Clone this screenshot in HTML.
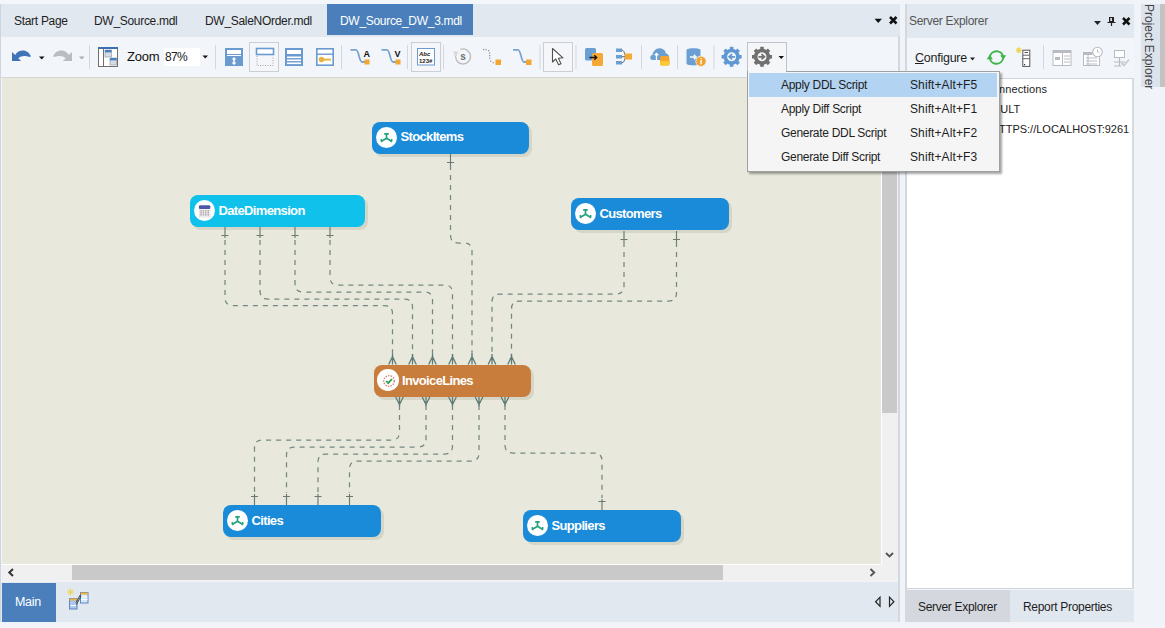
<!DOCTYPE html>
<html><head><meta charset="utf-8">
<style>
*{margin:0;padding:0;box-sizing:border-box}
html,body{width:1165px;height:628px;overflow:hidden;background:#f0f4f8;font-family:"Liberation Sans",sans-serif;font-size:12px;color:#1e1e1e}
.a{position:absolute}
.t{position:absolute;white-space:nowrap;letter-spacing:-0.3px}
.sep{position:absolute;top:45px;width:1px;height:24px;background:#d3d8de}
.pbtn{position:absolute;top:42px;width:30px;height:30px;border:1px solid #c2c6cc;background:#f4f6f9}
.ent{position:absolute;height:32px;border-radius:8px;box-shadow:3px 3px 0 #d6d6c8}
.ent .ic{position:absolute;left:3.7px;top:4.7px;width:21.6px;height:21.6px;border-radius:50%;background:#fff}
.ent .nm{position:absolute;left:28.5px;top:8px;font-weight:bold;font-size:13px;color:#fff;letter-spacing:-0.65px;white-space:nowrap}
</style></head><body>
<!-- left doc area -->
<div class="a" style="left:0;top:0;width:900px;height:4px;background:#f3f6fa"></div>
<div class="a" style="left:1px;top:4px;width:899px;height:33px;background:#e1e8f0"></div>
<div class="a" style="left:0;top:4px;width:1px;height:618px;background:#cfd5dc"></div>
<div class="t" style="left:14px;top:14px">Start Page</div>
<div class="t" style="left:94px;top:14px">DW_Source.mdl</div>
<div class="t" style="left:205px;top:14px">DW_SaleNOrder.mdl</div>
<div class="a" style="left:327px;top:4px;width:146px;height:31px;background:#4a7fbb"></div>
<div class="t" style="left:340px;top:14px;color:#fff">DW_Source_DW_3.mdl</div>
<!-- doc dropdown / close -->
<svg class="a" style="left:874px;top:18px" width="10" height="6"><path d="M0.5 0.8H8L4.25 5Z" fill="#111"/></svg>
<svg class="a" style="left:888px;top:15px" width="10" height="10"><path d="M2 2L8.5 8.5M8.5 2L2 8.5" stroke="#111" stroke-width="2.6"/></svg>

<!-- toolbar -->
<div class="a" style="left:1px;top:37px;width:898px;height:40px;background:#f2f5f9"></div>
<div class="a" style="left:1px;top:77px;width:898px;height:1px;background:#d4d6d6"></div>

<!-- canvas -->
<div class="a" style="left:2px;top:78px;width:879px;height:486px;background:#e8e9dc"></div>

<!-- diagram -->
<svg class="a" style="left:0;top:0" width="1165" height="628">
<g fill="none" stroke="#728880" stroke-width="1.25" stroke-dasharray="5 5">
<path d="M225,240 L225.0,297.5 Q225,305.5 233.0,305.5 L384.5,305.5 Q392.5,305.5 392.5,313.5 L392.5,356"/>
<path d="M260,240 L260.0,291.0 Q260,299 268.0,299.0 L404.5,299.0 Q412.5,299 412.5,307.0 L412.5,356"/>
<path d="M295,240 L295.0,284.0 Q295,292 303.0,292.0 L424.5,292.0 Q432.5,292 432.5,300.0 L432.5,356"/>
<path d="M330,240 L330.0,277.0 Q330,285 338.0,285.0 L444.5,285.0 Q452.5,285 452.5,293.0 L452.5,356"/>
<path d="M450.5,165 L450.5,235.0 Q450.5,243 458.5,243.0 L464.0,243.0 Q472,243 472.0,251.0 L472,356"/>
<path d="M624,242 L624.0,286.0 Q624,294 616.0,294.0 L500.0,294.0 Q492,294 492.0,302.0 L492,356"/>
<path d="M676.5,242 L676.5,293.0 Q676.5,301 668.5,301.0 L519.5,301.0 Q511.5,301 511.5,309.0 L511.5,356"/>
<path d="M399.5,405 L399.5,432.0 Q399.5,440 391.5,440.0 L262.5,440.0 Q254.5,440 254.5,448.0 L254.5,493"/>
<path d="M426,405 L426.0,439.0 Q426,447 418.0,447.0 L294.5,447.0 Q286.5,447 286.5,455.0 L286.5,493"/>
<path d="M452.5,405 L452.5,446.0 Q452.5,454 444.5,454.0 L326.0,454.0 Q318,454 318.0,462.0 L318,493"/>
<path d="M479,405 L479.0,453.0 Q479,461 471.0,461.0 L357.5,461.0 Q349.5,461 349.5,469.0 L349.5,493"/>
<path d="M505,405 L505.0,445.0 Q505,453 513.0,453.0 L594.0,453.0 Q602,453 602.0,461.0 L602,498"/>
</g>
</svg>
<div class="ent" style="left:372px;top:122px;width:157px;background:#1a8bd9"><div class="ic"></div><div class="nm" style="top:7px">StockItems</div></div>
<div class="ent" style="left:190px;top:195px;width:175px;background:#10c1ec"><div class="ic"></div><div class="nm">DateDimension</div></div>
<div class="ent" style="left:571px;top:198px;width:158px;background:#1a8bd9"><div class="ic"></div><div class="nm">Customers</div></div>
<div class="ent" style="left:373.5px;top:364.5px;width:157px;background:#c97d3d"><div class="ic"></div><div class="nm">InvoiceLines</div></div>
<div class="ent" style="left:223px;top:505px;width:158px;background:#1a8bd9"><div class="ic"></div><div class="nm">Cities</div></div>
<div class="ent" style="left:523px;top:510px;width:158px;background:#1a8bd9"><div class="ic"></div><div class="nm">Suppliers</div></div>
<svg class="a" style="left:0;top:0" width="1165" height="628">
<g fill="none" stroke="#6a7a73" stroke-width="1.15">
<path d="M225,227 V238 M221.5,235.5 H228.5"/>
<path d="M260,227 V238 M256.5,235.5 H263.5"/>
<path d="M295,227 V238 M291.5,235.5 H298.5"/>
<path d="M330,227 V238 M326.5,235.5 H333.5"/>
<path d="M450.5,154 V165 M447.0,162.5 H454.0"/>
<path d="M624,231 V242 M620.5,239.5 H627.5"/>
<path d="M676.5,231 V242 M673.0,239.5 H680.0"/>
<path d="M254.5,505 V494 M251.0,496.5 H258.0"/>
<path d="M286.5,505 V494 M283.0,496.5 H290.0"/>
<path d="M318,505 V494 M314.5,496.5 H321.5"/>
<path d="M349.5,505 V494 M346.0,496.5 H353.0"/>
<path d="M602,510 V499 M598.5,501.5 H605.5"/>
</g>
<g fill="none" stroke="#5f7a74" stroke-width="1.3">
<path d="M392.5,354 V364.5 M388.7,364.5 L392.5,356.5 L396.3,364.5"/>
<path d="M412.5,354 V364.5 M408.7,364.5 L412.5,356.5 L416.3,364.5"/>
<path d="M432.5,354 V364.5 M428.7,364.5 L432.5,356.5 L436.3,364.5"/>
<path d="M452.5,354 V364.5 M448.7,364.5 L452.5,356.5 L456.3,364.5"/>
<path d="M472,354 V364.5 M468.2,364.5 L472,356.5 L475.8,364.5"/>
<path d="M492,354 V364.5 M488.2,364.5 L492,356.5 L495.8,364.5"/>
<path d="M511.5,354 V364.5 M507.7,364.5 L511.5,356.5 L515.3,364.5"/>
<path d="M399.5,397 V406 M395.7,397 L399.5,404.5 L403.3,397"/>
<path d="M426,397 V406 M422.2,397 L426,404.5 L429.8,397"/>
<path d="M452.5,397 V406 M448.7,397 L452.5,404.5 L456.3,397"/>
<path d="M479,397 V406 M475.2,397 L479,404.5 L482.8,397"/>
<path d="M505,397 V406 M501.2,397 L505,404.5 L508.8,397"/>
</g>
<g fill="none" stroke="#23a37c" stroke-width="1.7" stroke-linecap="round"><path d="M386.5,138.3 V133.70000000000002 M384.9,133.9 H388.1 M386.5,138.3 L381.5,141.3 M386.5,138.3 L391.5,141.3 M381.2,139.70000000000002 L381.7,141.5 M391.8,139.70000000000002 L391.3,141.5"/></g>
<rect x="199.2" y="206.5" width="10.8" height="10.5" fill="#f4f4f8" stroke="#d5d5e0" stroke-width="0.6"/>
<rect x="198.9" y="205.3" width="11.4" height="3.6" rx="1.2" fill="#4b58a6"/>
<rect x="200.3" y="210.3" width="1.5" height="1.2" fill="#9c8f90"/>
<rect x="200.3" y="212.3" width="1.5" height="1.2" fill="#9c8f90"/>
<rect x="200.3" y="214.3" width="1.5" height="1.2" fill="#9c8f90"/>
<rect x="202.7" y="210.3" width="1.5" height="1.2" fill="#9c8f90"/>
<rect x="202.7" y="212.3" width="1.5" height="1.2" fill="#9c8f90"/>
<rect x="202.7" y="214.3" width="1.5" height="1.2" fill="#9c8f90"/>
<rect x="205.1" y="210.3" width="1.5" height="1.2" fill="#9c8f90"/>
<rect x="205.1" y="212.3" width="1.5" height="1.2" fill="#9c8f90"/>
<rect x="205.1" y="214.3" width="1.5" height="1.2" fill="#9c8f90"/>
<rect x="207.5" y="210.3" width="1.5" height="1.2" fill="#9c8f90"/>
<rect x="207.5" y="212.3" width="1.5" height="1.2" fill="#9c8f90"/>
<rect x="207.5" y="214.3" width="1.5" height="1.2" fill="#9c8f90"/>
<g fill="none" stroke="#23a37c" stroke-width="1.7" stroke-linecap="round"><path d="M585.5,214.3 V209.70000000000002 M583.9,209.9 H587.1 M585.5,214.3 L580.5,217.3 M585.5,214.3 L590.5,217.3 M580.2,215.70000000000002 L580.7,217.5 M590.8,215.70000000000002 L590.3,217.5"/></g>
<circle cx="389.0" cy="381.0" r="5.3" fill="none" stroke="#d9776b" stroke-width="1.3" stroke-dasharray="1.4 1.2"/>
<path d="M386.2,381.0 L388.2,383.2 L392.0,379.0" fill="none" stroke="#2aa44f" stroke-width="1.8"/>
<g fill="none" stroke="#23a37c" stroke-width="1.7" stroke-linecap="round"><path d="M237.5,521.3 V516.6999999999999 M235.9,516.9 H239.1 M237.5,521.3 L232.5,524.3 M237.5,521.3 L242.5,524.3 M232.2,522.6999999999999 L232.7,524.5 M242.8,522.6999999999999 L242.3,524.5"/></g>
<g fill="none" stroke="#23a37c" stroke-width="1.7" stroke-linecap="round"><path d="M537.5,526.3 V521.6999999999999 M535.9,521.9 H539.1 M537.5,526.3 L532.5,529.3 M537.5,526.3 L542.5,529.3 M532.2,527.6999999999999 L532.7,529.5 M542.8,527.6999999999999 L542.3,529.5"/></g>
<!-- undo -->
<path d="M12,52 V61 H21 L18.3,58.3 C20.5,56.2 23,55.6 25.5,56 C27.8,56.3 29.5,57.2 31,56.5 C29.5,52.8 26.5,50.5 22.8,50.5 C19.8,50.5 17.3,51.6 15.2,55 Z" fill="#3f74b9"/>
<path d="M39,56.5 H44.5 L41.75,59.5 Z" fill="#111"/>
<!-- redo -->
<path d="M72,52 V61 H63 L65.7,58.3 C63.5,56.2 61,55.6 58.5,56 C56.2,56.3 54.5,57.2 53,56.5 C54.5,52.8 57.5,50.5 61.2,50.5 C64.2,50.5 66.7,51.6 68.8,55 Z" fill="#b9bcc0"/>
<path d="M79,56.5 H84.5 L81.75,59.5 Z" fill="#a8abaf"/>
<rect x="89" y="45" width="1" height="24" fill="#d3d8de"/>
<!-- layout icon -->
<rect x="98.5" y="47.5" width="19" height="19" fill="#fff" stroke="#6e6e6e" stroke-width="1"/>
<rect x="98" y="47" width="20" height="2" fill="#3e6fae"/>
<rect x="103" y="49" width="1" height="17" fill="#6e6e6e"/>
<rect x="105" y="50" width="6.5" height="7" fill="#d6dde6" stroke="#8a8f96" stroke-width="0.6"/>
<rect x="105" y="50" width="6.5" height="2.4" fill="#4a7fc0"/>
<rect x="110" y="58" width="6.5" height="7" fill="#d6dde6" stroke="#8a8f96" stroke-width="0.6"/>
<rect x="110" y="58" width="6.5" height="2.4" fill="#4a7fc0"/>
<!-- zoom box -->
<rect x="164" y="48" width="36" height="18" fill="#fff"/>
<rect x="200" y="48" width="11" height="18" fill="#f3f5f8"/>
<path d="M202.5,55.5 H208 L205.25,58.5 Z" fill="#111"/>
<rect x="215" y="45" width="1" height="24" fill="#d3d8de"/>
<!-- icon1 -->
<rect x="225" y="48" width="18" height="18" fill="#6a9ad0"/>
<rect x="227" y="50" width="14" height="4" fill="#fff"/>
<rect x="227" y="55" width="14" height="1" fill="#fff"/>
<path d="M234,57 L231.5,59.5 H233.2 V62.5 H231.5 L234,65 L236.5,62.5 H234.8 V59.5 H236.5 Z" fill="#fff"/>
<!-- pressed button -->
<rect x="249.5" y="42.5" width="29" height="29" fill="#f4f6f9" stroke="#cbced3" stroke-width="1"/>
<rect x="256.5" y="48.5" width="17" height="6" fill="#fff" stroke="#6a9ad0" stroke-width="1.6"/>
<path d="M257,56 V65.5 H273 V56" fill="none" stroke="#8a8f96" stroke-width="0.8" stroke-dasharray="1 1.5"/>
<!-- icon3 -->
<rect x="285" y="48" width="18" height="18" fill="#6a9ad0"/>
<rect x="287" y="50" width="14" height="4" fill="#fff"/>
<rect x="287" y="56.5" width="14" height="1.6" fill="#fff"/>
<rect x="287" y="59.5" width="14" height="1.6" fill="#fff"/>
<rect x="287" y="62.5" width="14" height="1.6" fill="#fff"/>
<!-- key icon -->
<rect x="316.8" y="48.8" width="16.4" height="16.4" fill="#fff" stroke="#6a9ad0" stroke-width="1.6"/>
<rect x="317" y="53.5" width="16" height="1.4" fill="#6a9ad0"/>
<circle cx="321.5" cy="59.5" r="2.8" fill="#e8b441"/>
<rect x="323" y="58.6" width="8" height="2" fill="#e8b441"/>
<rect x="341" y="45" width="1" height="24" fill="#d3d8de"/>
<!-- connector A -->
<path d="M350.5,49.8 H356 C359,49.8 359,62 362,62 H365" fill="none" stroke="#7aa3cf" stroke-width="1.8"/>
<rect x="364.5" y="59.5" width="5" height="5" fill="#f3a52f"/>
<text x="363.6" y="57.2" font-family="Liberation Sans" font-weight="bold" font-size="9" fill="#111">A</text>
<!-- connector V -->
<path d="M381.5,49.8 H387 C390,49.8 390,62 393,62 H396" fill="none" stroke="#7aa3cf" stroke-width="1.8"/>
<rect x="395.5" y="59.5" width="5" height="5" fill="#f3a52f"/>
<text x="394.6" y="57.2" font-family="Liberation Sans" font-weight="bold" font-size="9" fill="#111">V</text>
<rect x="407" y="45" width="1" height="24" fill="#d3d8de"/>
<!-- abc pressed -->
<rect x="411.5" y="42.5" width="29" height="29" fill="#f4f6f9" stroke="#cbced3" stroke-width="1"/>
<rect x="417.5" y="48.5" width="17" height="16.5" fill="#fff" stroke="#6a9ad0" stroke-width="1"/>
<text x="419" y="55.5" font-family="Liberation Sans" font-weight="bold" font-style="italic" font-size="6" fill="#222">Abc</text>
<text x="419" y="62.5" font-family="Liberation Sans" font-weight="bold" font-size="6" fill="#222">123#</text>
<rect x="443" y="45" width="1" height="24" fill="#d3d8de"/>
<!-- circle s -->
<path d="M460.4,49.45 A7.5,7.5 0 1 1 455.95,53.93" fill="none" stroke="#bdbdbd" stroke-width="1.3"/>
<path d="M453.2,51.2 L458.6,51.8 L455.2,57 Z" fill="#d6d8da"/>
<text x="460.2" y="59.8" font-family="Liberation Sans" font-weight="bold" font-size="10" fill="#707070">s</text>
<!-- dotted connector -->
<g fill="#8a8f96"><rect x="483" y="49" width="1.2" height="1.2"/><rect x="485.5" y="49" width="1.2" height="1.2"/><rect x="488" y="50" width="1.2" height="1.2"/><rect x="489" y="52.5" width="1.2" height="1.2"/><rect x="489" y="55" width="1.2" height="1.2"/><rect x="489" y="57.5" width="1.2" height="1.2"/><rect x="490" y="60.5" width="1.2" height="1.2"/><rect x="492.5" y="62" width="1.2" height="1.2"/></g>
<rect x="495.5" y="59.5" width="5.5" height="5.5" fill="#f3a52f"/>
<!-- solid connector -->
<path d="M513,49.8 H518 C521,49.8 521,62 524,62 H527" fill="none" stroke="#7aa3cf" stroke-width="1.8"/>
<rect x="526" y="59.5" width="5.5" height="5.5" fill="#f3a52f"/>
<rect x="539.5" y="45" width="1" height="24" fill="#d3d8de"/>
<!-- pointer pressed -->
<rect x="543.5" y="42.5" width="29" height="29" fill="#f4f6f9" stroke="#cbced3" stroke-width="1"/>
<path d="M552.5,48.5 V62 L555.8,59 L558.6,64.8 L561,63.7 L558.4,58.2 L563,57.8 Z" fill="#fff" stroke="#505050" stroke-width="1.1" stroke-linejoin="round"/>
<rect x="575.5" y="45" width="1" height="24" fill="#d3d8de"/>
<!-- import -->
<rect x="585" y="48" width="11" height="12.5" rx="1.5" fill="#6b9fd3"/>
<rect x="592" y="53" width="11" height="13" rx="1.5" fill="#f5a833"/>
<path d="M589.5,57.5 H596.5 M594.3,55.3 L596.7,57.5 L594.3,59.7" fill="none" stroke="#111" stroke-width="1.3"/>
<!-- merge -->
<rect x="616" y="48.5" width="6" height="3.5" fill="#6b9fd3"/>
<rect x="616" y="55" width="6" height="3.5" fill="#6b9fd3"/>
<rect x="616" y="61" width="6" height="3.5" fill="#6b9fd3"/>
<path d="M622,50.2 C625,50.2 624.5,56.5 626,56.5 M622,56.7 H626 M622,62.8 C625,62.8 624.5,56.8 626,56.8" fill="none" stroke="#555" stroke-width="0.9"/>
<rect x="625" y="53.5" width="7" height="6" fill="#f5a833"/>
<rect x="641" y="45" width="1" height="24" fill="#d3d8de"/>
<!-- cloud -->
<path d="M652.5,60 C649.5,60 649.5,55 652.5,55 C653,51 656,48.2 659.5,48.2 C663,48.2 665.5,50.5 666,53.5 C668.3,53.8 669.3,56 669,58 L660,60 Z" fill="#6b9fd3"/>
<path d="M656.5,60 V53.5 M654.7,55.3 L656.5,53.5 L658.3,55.3" fill="none" stroke="#fff" stroke-width="1.3"/>
<rect x="660" y="56" width="9.5" height="9.5" rx="2" fill="#f5a52e"/>
<rect x="660" y="61" width="9.5" height="4.5" rx="1.5" fill="#f8c933"/>
<rect x="677" y="45" width="1" height="24" fill="#d3d8de"/>
<!-- db info -->
<path d="M686.5,50 C686.5,47.5 700.5,47.5 700.5,50 V63.5 C700.5,66 686.5,66 686.5,63.5 Z" fill="#6b9fd3"/>
<path d="M690,57 H696 M693.8,54.7 L696.2,57 L693.8,59.3" fill="none" stroke="#fff" stroke-width="1.4"/>
<circle cx="701" cy="61.3" r="5.2" fill="#f0a331" stroke="#f4f6f9" stroke-width="0.8"/>
<rect x="700.4" y="58" width="1.3" height="1.3" fill="#fff"/><rect x="700.4" y="60" width="1.3" height="4.3" fill="#fff"/>
<rect x="713.5" y="45" width="1" height="24" fill="#d3d8de"/>

</svg>
<!-- vertical scrollbar -->

<div class="a" style="left:881px;top:78px;width:1px;height:486px;background:#fff"></div>
<div class="a" style="left:882px;top:78px;width:16px;height:503px;background:#f0f0f0"></div>
<div class="a" style="left:882px;top:172px;width:15px;height:241px;background:#c9c9c9"></div>
<!-- horizontal scrollbar -->
<div class="a" style="left:2px;top:564px;width:879px;height:1px;background:#fff"></div>
<div class="a" style="left:2px;top:565px;width:880px;height:16px;background:#f0f0f0"></div>
<div class="a" style="left:72px;top:565px;width:651px;height:15px;background:#c9c9c9"></div>
<div class="a" style="left:898px;top:36px;width:2px;height:586px;background:#d3d8de"></div>

<!-- bottom strip -->
<div class="a" style="left:1px;top:582px;width:897px;height:40px;background:#e1e8f0"></div>
<div class="a" style="left:2px;top:583px;width:54px;height:39px;background:#4a7fbb"></div>
<div class="t" style="left:15px;top:595px;color:#fff;font-size:12.5px">Main</div>

<!-- server explorer -->
<div class="a" style="left:905px;top:4px;width:229px;height:618px;background:#f2f5f9;border-left:2px solid #d3d8de"></div>
<div class="a" style="left:907px;top:4px;width:227px;height:34px;background:#e1e8f0"></div>
<div class="t" style="left:909px;top:14px;color:#555">Server Explorer</div>
<div class="a" style="left:907px;top:78px;width:227px;height:511px;background:#fff;border-top:1px solid #d0d5db;border-bottom:1px solid #d0d5db;border-right:2px solid #d7dbe0"></div>
<div class="a" style="left:905px;top:590px;width:105px;height:32px;background:#d4d8de"></div>
<div class="a" style="left:1010px;top:590px;width:124px;height:32px;background:#e1e7ef"></div>
<div class="t" style="left:918px;top:600px">Server Explorer</div>
<div class="t" style="left:1023px;top:600px">Report Properties</div>
<!-- project explorer -->
<div class="a" style="left:1141px;top:4px;width:19px;height:83px;background:#dce3ec"></div>
<div class="a" style="left:1160px;top:4px;width:5px;height:83px;background:#c3c3c3"></div>


<div class="t" style="left:127px;top:49px;font-size:13px;color:#111;letter-spacing:-0.2px">Zoom</div>
<div class="t" style="left:165px;top:50px;font-size:12px;color:#222;letter-spacing:-0.7px">87%</div>
<!-- server explorer details -->
<div class="t" style="left:915px;top:51px;font-size:12.5px;color:#1e1e1e;letter-spacing:-0.25px"><span style="text-decoration:underline">C</span>onfigure</div>
<div class="a" style="left:1043px;top:45px;width:1px;height:24px;background:#d3d8de"></div>
<div class="t" style="left:958px;top:83px;color:#222;font-size:11px;letter-spacing:0.1px">Data Connections</div>
<div class="t" style="left:971px;top:103px;color:#222;font-size:11px;letter-spacing:0.1px">DEFAULT</div>
<div class="t" style="left:991px;top:123px;color:#222;font-size:11px;letter-spacing:0px">HTTPS://LOCALHOST:9261</div>
<div class="t" style="left:1142px;top:4px;width:83px;height:19px;color:#444;letter-spacing:0px;transform-origin:0 0;transform:translate(15.5px,0) rotate(90deg);line-height:19px;padding-left:0px">Project Explorer</div>

<!-- menu -->
<div class="a" style="left:747px;top:42px;width:40px;height:31px;background:#f5f6f8;border:1px solid #c0c3c7;border-bottom:none"></div>
<div class="a" style="left:747px;top:71px;width:253px;height:101px;background:#f5f5f5;border:1px solid #a0a0a0;box-shadow:2px 2px 2px rgba(0,0,0,0.35)"></div>
<div class="a" style="left:748px;top:43px;width:38px;height:30px;background:#f5f6f8"></div>
<div class="a" style="left:749px;top:73px;width:248px;height:24px;background:#b3d3f2"></div>
<div class="t" style="left:781px;top:78px;letter-spacing:-0.3px">Apply DDL Script</div>
<div class="t" style="left:781px;top:102px;letter-spacing:-0.3px">Apply Diff Script</div>
<div class="t" style="left:781px;top:126px;letter-spacing:-0.3px">Generate DDL Script</div>
<div class="t" style="left:781px;top:150px;letter-spacing:-0.3px">Generate Diff Script</div>
<div class="t" style="left:910px;top:78px;letter-spacing:0.1px">Shift+Alt+F5</div>
<div class="t" style="left:910px;top:102px;letter-spacing:0.1px">Shift+Alt+F1</div>
<div class="t" style="left:910px;top:126px;letter-spacing:0.1px">Shift+Alt+F2</div>
<div class="t" style="left:910px;top:150px;letter-spacing:0.1px">Shift+Alt+F3</div>
<svg class="a" style="left:0;top:0" width="1165" height="628">
<circle cx="731.6" cy="56.8" r="6.3" fill="none" stroke="#5f98d2" stroke-width="3.6"/>
<rect x="729.8000000000001" y="46.8" width="3.6" height="4" fill="#5f98d2" transform="rotate(0 731.6 56.8)"/>
<rect x="729.8000000000001" y="46.8" width="3.6" height="4" fill="#5f98d2" transform="rotate(45 731.6 56.8)"/>
<rect x="729.8000000000001" y="46.8" width="3.6" height="4" fill="#5f98d2" transform="rotate(90 731.6 56.8)"/>
<rect x="729.8000000000001" y="46.8" width="3.6" height="4" fill="#5f98d2" transform="rotate(135 731.6 56.8)"/>
<rect x="729.8000000000001" y="46.8" width="3.6" height="4" fill="#5f98d2" transform="rotate(180 731.6 56.8)"/>
<rect x="729.8000000000001" y="46.8" width="3.6" height="4" fill="#5f98d2" transform="rotate(225 731.6 56.8)"/>
<rect x="729.8000000000001" y="46.8" width="3.6" height="4" fill="#5f98d2" transform="rotate(270 731.6 56.8)"/>
<rect x="729.8000000000001" y="46.8" width="3.6" height="4" fill="#5f98d2" transform="rotate(315 731.6 56.8)"/>
<path d="M735.1,56.8 H730.6 M732.1,54.199999999999996 L729.2,56.8 L732.1,59.4" fill="none" stroke="#5f98d2" stroke-width="1.8"/>
<circle cx="762" cy="56.8" r="6.3" fill="none" stroke="#707070" stroke-width="3.6"/>
<rect x="760.2" y="46.8" width="3.6" height="4" fill="#707070" transform="rotate(0 762 56.8)"/>
<rect x="760.2" y="46.8" width="3.6" height="4" fill="#707070" transform="rotate(45 762 56.8)"/>
<rect x="760.2" y="46.8" width="3.6" height="4" fill="#707070" transform="rotate(90 762 56.8)"/>
<rect x="760.2" y="46.8" width="3.6" height="4" fill="#707070" transform="rotate(135 762 56.8)"/>
<rect x="760.2" y="46.8" width="3.6" height="4" fill="#707070" transform="rotate(180 762 56.8)"/>
<rect x="760.2" y="46.8" width="3.6" height="4" fill="#707070" transform="rotate(225 762 56.8)"/>
<rect x="760.2" y="46.8" width="3.6" height="4" fill="#707070" transform="rotate(270 762 56.8)"/>
<rect x="760.2" y="46.8" width="3.6" height="4" fill="#707070" transform="rotate(315 762 56.8)"/>
<path d="M758.5,56.8 H763 M761.5,54.199999999999996 L764.4,56.8 L761.5,59.4" fill="none" stroke="#707070" stroke-width="1.8"/>
<path d="M778.5,56 H784 L781.25,59 Z" fill="#111"/>
<!-- server explorer title icons -->
<path d="M1094,21 H1101 L1097.5,25 Z" fill="#222"/>
<rect x="1109" y="17" width="5" height="5" fill="#222"/><rect x="1110.3" y="18" width="1.6" height="3" fill="#e6ebf1"/><path d="M1107.5,22.5 H1115.5 M1111.5,22.5 V26" fill="none" stroke="#222" stroke-width="1.2"/>
<path d="M1123,18 L1129.5,24.5 M1129.5,18 L1123,24.5" stroke="#111" stroke-width="2.5"/>
<!-- configure arrow -->
<path d="M970,57.5 H975 L972.5,60.5 Z" fill="#222"/>
<!-- refresh -->
<path d="M989.8,57.5 A6.8,6.8 0 0 1 1003.2,56.5" fill="none" stroke="#3db54a" stroke-width="1.9"/>
<path d="M1000.2,55.2 H1006.2 L1003.2,59.8 Z" fill="#3db54a"/>
<path d="M1003.2,57.5 A6.8,6.8 0 0 1 989.8,58.5" fill="none" stroke="#3db54a" stroke-width="1.9"/>
<path d="M986.8,59.2 H992.8 L989.8,54.6 Z" fill="#3db54a"/>
<!-- server icon -->
<rect x="1022.8" y="50.2" width="7" height="16.2" fill="#fff" stroke="#555" stroke-width="1"/>
<path d="M1023,55.2 H1029.5 M1023,58.7 H1029.5" stroke="#555" stroke-width="0.9"/>
<path d="M1024.5,52.5 H1028" stroke="#555" stroke-width="1"/>
<rect x="1024" y="64" width="1.2" height="1.2" fill="#333"/>
<g stroke="#f0d24a" stroke-width="1.1"><path d="M1018.7,47.2 V53.2 M1015.7,50.2 H1021.7 M1016.6,48.1 L1020.8,52.3 M1020.8,48.1 L1016.6,52.3"/></g>
<!-- table icon -->
<rect x="1053" y="50.5" width="18" height="15" fill="#fff" stroke="#b8bcc2" stroke-width="1"/>
<rect x="1053" y="50.5" width="18" height="2.5" fill="#b8bcc2"/>
<rect x="1055" y="57" width="5" height="3" fill="#b8bcc2"/>
<path d="M1062.5,53 V65.5 M1064,56 H1070 M1064,59 H1070 M1064,62 H1070" stroke="#b8bcc2" stroke-width="1"/>
<!-- scheduled icon -->
<rect x="1083.5" y="52.5" width="16" height="13" fill="#fff" stroke="#b8bcc2" stroke-width="1"/>
<rect x="1083.5" y="52.5" width="9" height="2.5" fill="#b8bcc2"/>
<path d="M1086,58 H1097 M1086,61 H1097 M1086,64 H1097 M1088,55 V65" stroke="#b8bcc2" stroke-width="1"/>
<circle cx="1097.5" cy="52" r="4.8" fill="#fff" stroke="#b8bcc2" stroke-width="1.1"/>
<path d="M1097.5,49.5 V52.2 H1099.5" fill="none" stroke="#b8bcc2" stroke-width="0.9"/>
<!-- network icon -->
<rect x="1114.5" y="50.5" width="10" height="7" fill="#fff" stroke="#b8bcc2" stroke-width="1"/>
<path d="M1119.5,58 V62 M1114,62 H1125 M1119.5,62 V66 M1114,66 H1121" stroke="#b8bcc2" stroke-width="1.2"/>
<path d="M1121.5,63 L1124,65.5 L1129,59.5" fill="none" stroke="#c8cbd0" stroke-width="1.8"/>
<!-- scroll arrows -->
<path d="M886,553 L889.5,556.5 L893,553" fill="none" stroke="#555" stroke-width="1.9"/>
<path d="M13,569 L9.3,572.5 L13,576" fill="none" stroke="#333" stroke-width="2"/>
<path d="M870.5,569 L874.2,572.5 L870.5,576" fill="none" stroke="#555" stroke-width="1.9"/>
<!-- bottom nav arrows -->
<path d="M880,597.2 V606.3 L875.6,601.75 Z" fill="none" stroke="#222" stroke-width="1.2"/>
<path d="M889.5,597.2 V606.3 L893.9,601.75 Z" fill="none" stroke="#222" stroke-width="1.2"/>
<!-- bottom diagram icon -->
<g stroke="#f0d040" stroke-width="0.9"><path d="M70.5,588.5 V595.5 M67,592 H74 M68,589.5 L73,594.5 M73,589.5 L68,594.5"/></g>
<rect x="69.5" y="598.5" width="7.5" height="10.5" fill="#a9c8ec" stroke="#5a86c2" stroke-width="1"/>
<rect x="69.5" y="598.5" width="7.5" height="2" fill="#f0b040"/>
<path d="M70.5,605.5 H76" stroke="#fff" stroke-width="1"/>
<rect x="80.5" y="592.5" width="7.5" height="10.5" fill="#d8e6f6" stroke="#5a86c2" stroke-width="1"/>
<rect x="80.5" y="592.5" width="7.5" height="2" fill="#f0b040"/>
<path d="M81,597 H87.5 M81,599.5 H87.5" stroke="#fff" stroke-width="1"/>
<path d="M76.5,604.5 L81,596 M76,602.5 L80.5,594.5" stroke="#333" stroke-width="0.9"/>

</svg>
</body></html>
